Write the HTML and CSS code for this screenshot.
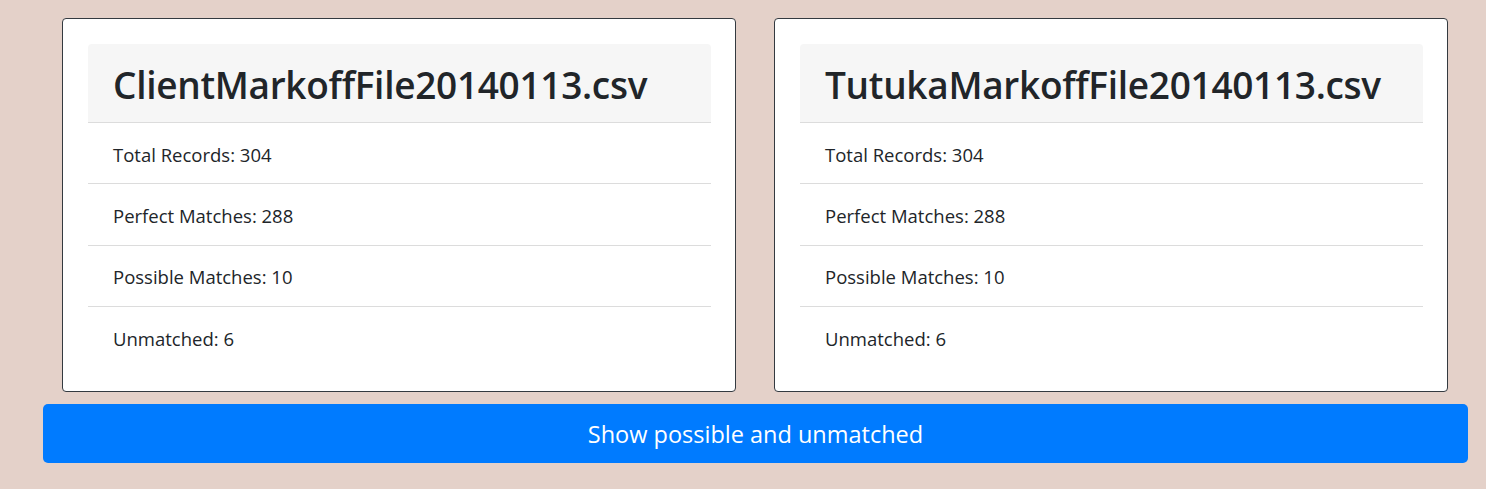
FILE: index.html
```html
<!DOCTYPE html>
<html>
<head>
<meta charset="utf-8">
<link rel="stylesheet" href="styles.css">
</head>
<body>
<div class="page">
  <div class="row">
    <div class="col">
      <div class="card">
        <div class="list">
          <div class="head"><h1>ClientMarkoffFile20140113.csv</h1></div>
          <div class="item">Total Records: 304</div>
          <div class="item">Perfect Matches: 288</div>
          <div class="item">Possible Matches: 10</div>
          <div class="item last">Unmatched: 6</div>
        </div>
      </div>
    </div>
    <div class="col">
      <div class="card">
        <div class="list">
          <div class="head"><h1>TutukaMarkoffFile20140113.csv</h1></div>
          <div class="item">Total Records: 304</div>
          <div class="item">Perfect Matches: 288</div>
          <div class="item">Possible Matches: 10</div>
          <div class="item last">Unmatched: 6</div>
        </div>
      </div>
    </div>
  </div>
  <button class="btn">Show possible and unmatched</button>
</div>
</body>
</html>
```
FILE: styles.css
```css
html, body {
  margin: 0;
  padding: 0;
  background: #e4d1c9;
  font-family: "Open Sans", "Noto Sans", sans-serif;
  color: #212529;
}
.page {
  padding: 18px 19px 0 43px;
  width: 1424px;
}
.row {
  display: flex;
}
.col {
  width: 712px;
  padding: 0 19px;
  box-sizing: border-box;
}
.card {
  background: #fff;
  border: 1px solid #343a40;
  border-radius: 4px;
  padding: 25px 24px 23px 25px;
}
.head {
  background: #f6f6f6;
  border-bottom: 1px solid #dcdcdc;
  height: 79px;
  display: flex;
  align-items: center;
  padding: 4px 25px 0;
  box-sizing: border-box;
  border-radius: 4px 4px 0 0;
}
h1 {
  margin: 0;
  font-size: 37px;
  font-weight: 600;
  letter-spacing: -0.3px;
  line-height: 1.2;
}
.item {
  height: 61.3px;
  box-sizing: border-box;
  display: flex;
  align-items: center;
  padding: 2px 25px 0;
  border-bottom: 1px solid #dcdcdc;
  font-size: 18.5px;
}
.item.last {
  border-bottom: none;
}
.btn {
  display: block;
  width: 1425px;
  height: 59px;
  margin-top: 12px;
  padding-top: 2px;
  background: #007bff;
  color: #fff;
  border: none;
  border-radius: 5px;
  font-family: "Open Sans", "Noto Sans", sans-serif;
  font-size: 23.5px;
}
```
